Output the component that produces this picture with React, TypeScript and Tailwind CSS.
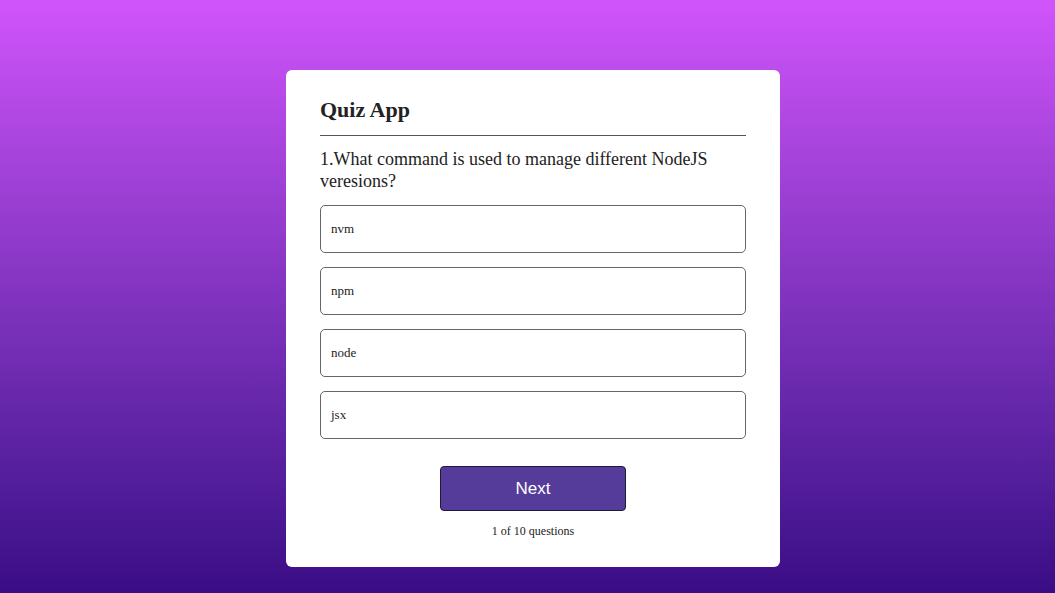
const options = ['nvm', 'npm', 'node', 'jsx'];

export default function App() {
  return (
    <div
      className="flex min-h-screen w-full items-start justify-center bg-gradient-to-b from-[#d154fb] to-[#3a0c86] pt-[70px] pl-[11px]"
      style={{ fontFamily: '"Liberation Serif", "Times New Roman", serif' }}
    >
      <div className="w-[494px] rounded-md bg-white px-[34px] pt-[27px] pb-[29px] text-[#222]">
        <h2 className="text-[22px] font-bold leading-[25px]">Quiz App</h2>
        <hr className="mt-[13px] border-t border-[#555]" />

        <p className="mt-[13px] text-[18px] leading-[21.5px]">
          1.What command is used to manage different NodeJS veresions?
        </p>

        <div className="mt-[13px] flex flex-col gap-[14px]">
          {options.map((opt) => (
            <button
              key={opt}
              className="flex h-[48px] w-full items-center rounded-[5px] border border-[#666] bg-white pl-[10px] text-left text-[13px]"
            >
              {opt}
            </button>
          ))}
        </div>

        <div className="mt-[27px] flex justify-center">
          <button
            className="h-[45px] w-[186px] rounded-[4px] border border-[#1e1a3a] bg-[#553c9a] text-[17px] text-white"
            style={{ fontFamily: '"Liberation Sans", Arial, sans-serif' }}
          >
            Next
          </button>
        </div>

        <p className="mt-[13px] text-center text-[12px] leading-[14px]">1 of 10 questions</p>
      </div>
    </div>
  );
}
